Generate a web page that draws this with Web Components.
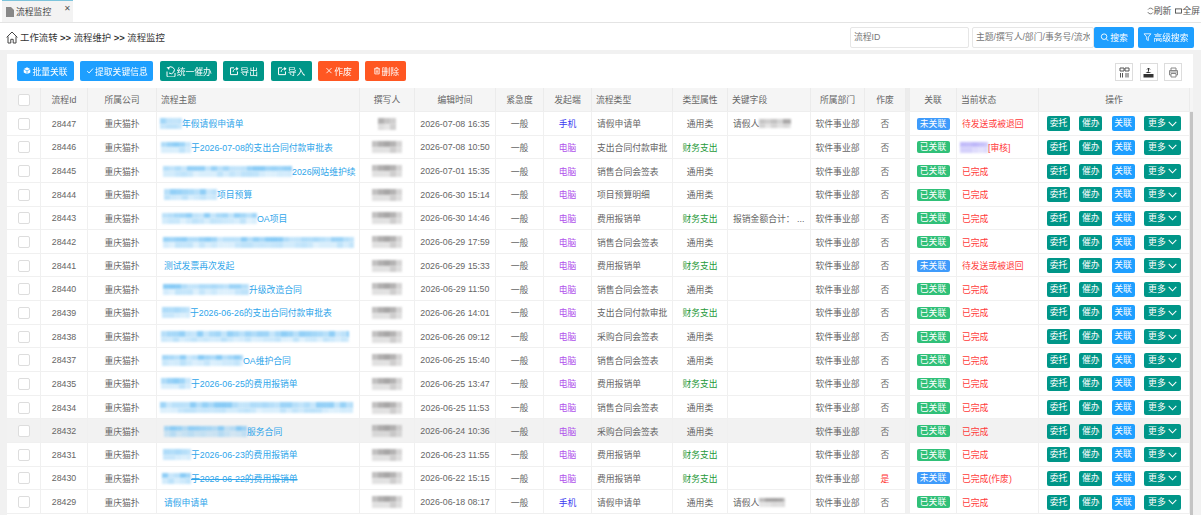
<!DOCTYPE html>
<html lang="zh-CN">
<head>
<meta charset="utf-8">
<title>流程监控</title>
<style>
  html, body { margin: 0; height: 100%; overflow: hidden; background: #f1f1f1; }
  body { font: 8.8px "Liberation Sans", "Noto Sans CJK SC", sans-serif; color: #666; }
  :root {
    --cols: 34px 47px 69px 203px 55px 81px 48px 48px 81px 55px 83px 54px 41px 4px 47px 82px 151px;
  }
</style>
</head>
<body>
<app-shell>
  <tab-bar></tab-bar>
  <crumb-bar></crumb-bar>
  <div slot="panel">
    <tool-bar></tool-bar>
    <flow-table></flow-table>
  </div>
</app-shell>

<script>
const ICONS = {
  cube: '<path fill="currentColor" d="M5 .5 9.3 2.6 5 4.7.7 2.6zM.5 3.6 4.5 5.6v3.9L.5 7.5zM9.5 3.6v3.9l-4 2V5.6z"/>',
  check: '<path fill="none" stroke="currentColor" stroke-width="1.2" d="M1 5.5 3.8 8.2 9 2.2"/>',
  urge: '<path fill="none" stroke="currentColor" stroke-width="1" d="M1.5 5.5V10a1 1 0 0 0 1 1h6a1 1 0 0 0 1-1V7M2.5 2.5a3.4 3.4 0 1 1 1 4.5"/><path fill="currentColor" d="M1 1.2 4 1 3.6 4z"/>',
  share: '<path fill="none" stroke="currentColor" stroke-width="1.1" d="M5 2H1.2v7.5h7.6V6M4 6.5C4.3 4 5.800 3 8.500 3"/><path fill="currentColor" d="M7.500 .8 10 3 7.500 5.200z"/>',
  close: '<path fill="none" stroke="currentColor" stroke-width="1.2" d="M1.5 1.5 8.500 8.500M8.500 1.500 1.500 8.500"/>',
  trash: '<path fill="none" stroke="currentColor" stroke-width="1.1" d="M1 2.500H9M3.500 2.500V1h3v1.500M2 2.500V9.500H8V2.500M4 4.500V8M6 4.500V8"/>',
  search: '<circle cx="4.500" cy="4.500" r="3.400" fill="none" stroke="currentColor" stroke-width="1.1"/><path stroke="currentColor" stroke-width="1.1" d="M7 7 9.500 9.500"/>',
  funnel: '<path fill="none" stroke="currentColor" stroke-width="1" d="M.8 1H9.200L6 5V9.300L4 8V5z"/>'
};

class AppShell extends HTMLElement {
  constructor() {
    super();
    this.attachShadow({ mode: "open" }).innerHTML = `
    <style>
      :host { display: flex; flex-direction: column; height: 100vh; filter: blur(.3px); }
      .panel { flex: 1; min-height: 0; margin: 4px 8px 0 7px; background: #fff; overflow: hidden; }
    </style>
    <slot></slot>
    <div class="panel"><slot name="panel"></slot></div>`;
  }
}

class TabBar extends HTMLElement {
  constructor() {
    super();
    this.attachShadow({ mode: "open" }).innerHTML = `
    <style>
      :host { display: flex; height: 22px; background: #fff; border-bottom: 1px solid #e4e4e4; align-items: stretch; }
      .tab { position: relative; margin-left: 2px; width: 71px; background: #f3f3f3; border-top: 1px solid #7cc4dc;
        display: flex; align-items: center; gap: 2px; padding-left: 2px; box-sizing: border-box; color: #444; font-size: 8.8px; }
      .tab svg { width: 8px; height: 10px; color: #888; margin-left: 2px; }
      .x { position: absolute; right: 1px; top: 3px; width: 8px; font-size: 8px; color: #555; }
      .right { margin-left: auto; display: flex; gap: 4px; align-items: flex-end; padding: 0 1px 6px 0; color: #555; font-size: 8.800px; line-height: 10px; }
      .right span { display: flex; align-items: center; }
      .right svg { width: 7px; height: 8px; }
    </style>
    <div class="tab">
      <svg viewBox="0 0 8 10"><path fill="currentColor" d="M0 0H5L8 3V10H0z"/></svg>
      <span>流程监控</span><span class="x">✕</span>
    </div>
    <div class="right">
      <span><svg viewBox="0 0 10 10"><path fill="none" stroke="#666" stroke-width="1.200" d="M8.800 3.500A4 4 0 0 0 1.500 3M1.200 6.500A4 4 0 0 0 8.500 7"/></svg>刷新</span>
      <span><svg viewBox="0 0 10 10"><rect x=".7" y="2" width="8.600" height="6" fill="none" stroke="#444" stroke-width="1.200"/></svg>全屏</span>
    </div>`;
  }
}

class CrumbBar extends HTMLElement {
  constructor() {
    super();
    this.attachShadow({ mode: "open" }).innerHTML = `
    <style>
      :host { display: flex; height: 27px; background: #fff; align-items: center; padding: 1px 7px 0 6px; box-sizing: border-box; }
      svg { width: 12px; height: 13px; color: #444; margin-right: 2px; }
      .path { color: #333; font-size: 9.400px; white-space: nowrap; }
      .search { margin-left: auto; display: flex; align-items: center; }
      input { height: 21px; box-sizing: border-box; border: 1px solid #e6e6e6; border-radius: 2px; padding: 0 3px; font: 8.800px "Liberation Sans", "Noto Sans CJK SC", sans-serif; color: #666; outline: 0; }
      input::placeholder { color: #777; opacity: 1; }
      .id { width: 119px; margin-right: 3px; }
      .kw { width: 122px; }
      ui-btn + ui-btn { margin-left: 4px; }
    </style>
    <svg viewBox="0 0 12 13"><path fill="none" stroke="currentColor" stroke-width="1" d="M.6 6.400 6 1l5.400 5.400M2 5.500V12h2.800V8.300h2.400V12H10V5.500"/></svg>
    <span class="path">工作流转 <b>&gt;&gt;</b> 流程维护 <b>&gt;&gt;</b> 流程监控</span>
    <div class="search">
      <input class="id" placeholder="流程ID">
      <input class="kw" placeholder="主题/撰写人/部门/事务号/流水号">
      <ui-btn tone="blue" icon="search" w="40" h="21" sz="9">搜索</ui-btn>
      <ui-btn tone="blue" icon="funnel" w="56" h="21" sz="9">高级搜索</ui-btn>
    </div>`;
  }
}

class UiBtn extends HTMLElement {
  constructor() {
    super();
    const tone = { blue: "#1e9fff", teal: "#009688", orange: "#ff5722" }[this.getAttribute("tone")];
    const icon = ICONS[this.getAttribute("icon")];
    const sz = this.getAttribute("sz") || 8;
    this.attachShadow({ mode: "open" }).innerHTML = `
    <style>
      :host { display: inline-flex; width: ${this.getAttribute("w")}px; height: ${this.getAttribute("h") || 20}px; }
      .b { flex: 1; display: flex; align-items: center; justify-content: center; gap: 1px; background: ${tone}; color: #fff; border-radius: 2px; font-size: 8.800px; white-space: nowrap; }
      svg { width: ${sz}px; height: ${sz}px; flex: none; }
    </style>
    <div class="b">${icon ? `<svg viewBox="0 0 10 11">${icon}</svg>` : ""}<slot></slot></div>`;
  }
}

class ToolBar extends HTMLElement {
  constructor() {
    super();
    this.attachShadow({ mode: "open" }).innerHTML = `
    <style>
      :host { display: flex; height: 34px; box-sizing: border-box; padding: 7px 11px 0 10px; gap: 6.4px; }
      .tools { margin-left: auto; display: flex; gap: 6.500px; padding-top: 2px; }
      .t { width: 18px; height: 18px; box-sizing: border-box; border: 1px solid #ddd; display: flex; align-items: center; justify-content: center; }
      .t svg { width: 11px; height: 11px; }
    </style>
    <ui-btn tone="blue" icon="cube" w="57">批量关联</ui-btn>
    <ui-btn tone="blue" icon="check" w="73">提取关键信息</ui-btn>
    <ui-btn tone="teal" icon="urge" w="57" sz="11">统一催办</ui-btn>
    <ui-btn tone="teal" icon="share" w="41" sz="10">导出</ui-btn>
    <ui-btn tone="teal" icon="share" w="41" sz="10">导入</ui-btn>
    <ui-btn tone="orange" icon="close" w="41">作废</ui-btn>
    <ui-btn tone="orange" icon="trash" w="41">删除</ui-btn>
    <div class="tools">
      <span class="t"><svg viewBox="0 0 11 11"><path fill="none" stroke="#555" d="M1 1H5V4H1zM6 1H10V4H6zM1.500 6V10.500M3.500 6V10.500M7 6V10.500M9 6V10.500"/></svg></span>
      <span class="t"><svg viewBox="0 0 11 11"><path fill="#333" d="M.5 7H10.500V10.500H.5zM2.500 6 5 4.500 8.500 6z"/><path fill="none" stroke="#333" d="M5.500 4.500V1M4 2.500 5.500 1 7 2.500"/></svg></span>
      <span class="t"><svg viewBox="0 0 11 11"><path fill="none" stroke="#888" d="M3 3.500V1H8V3.500M3 8H1.500V3.500H9.500V8H8M3 6.500H8V10H3zM1.500 5H9.500"/></svg></span>
    </div>`;
  }
}

// 打码区域：模糊的色块，按种子生成深浅
class BlurMask extends HTMLElement {
  constructor() {
    super();
    const w = +this.getAttribute("w");
    const h = +this.getAttribute("h") || 11;
    const rgb = { blue: "120,196,245", grey: "150,148,148", purple: "150,140,245" }[this.getAttribute("tone") || "blue"];
    let seed = w * 7 + 3;
    const strip = (k) => {
      const stops = [];
      for (let x = 0; x < w; x += 6) {
        seed = (seed * 31 + 11) % 97;
        const a = (k * (0.4 + (seed % 50) / 100)).toFixed(2);
        stops.push(`rgba(${rgb},${a}) ${x}px ${x + 6}px`);
      }
      return `linear-gradient(90deg,${stops.join(",")})`;
    };
    this.attachShadow({ mode: "open" }).innerHTML = `
    <style>
      :host { display: inline-block; flex: none; width: ${w}px; height: ${h}px; vertical-align: middle; }
      div { width: 100%; height: 50%; filter: blur(1.2px); }
    </style>
    <div style="background:${strip(1)}"></div>
    <div style="background:${strip(0.55)}"></div>`;
  }
}

class FlowHead extends HTMLElement {
  constructor() {
    super();
    const labels = [["", "c"], ["流程Id", "c"], ["所属公司", "c"], ["流程主题", "l"], ["撰写人", "c"], ["编辑时间", "c"], ["紧急度", "c"], ["发起端", "c"],
      ["流程类型", "l"], ["类型属性", "c"], ["关键字段", "l"], ["所属部门", "c"], ["作废", "c"], ["", "g"], ["关联", "c"], ["当前状态", "l"], ["操作", "c"]];
    this.attachShadow({ mode: "open" }).innerHTML = `
    <style>
      :host { display: grid; grid-template-columns: var(--cols) 3px; height: 24px; background: #f5f5f5; border-bottom: 1px solid #eee; box-sizing: border-box; }
      div { display: flex; align-items: center; justify-content: center; border-right: 1px solid #ebebeb; color: #666; box-sizing: border-box; white-space: nowrap; }
      .l { justify-content: flex-start; padding-left: 4px; }
      .g { background: #ececec; }
      i { width: 12px; height: 12px; border: 1px solid #ddd; border-radius: 2px; background: #fff; box-sizing: border-box; }
    </style>
    ${labels.map(([t, k], n) => `<div class="${k}">${n === 0 ? "<i></i>" : t}</div>`).join("")}<div style="border:0"></div>`;
  }
}

class FlowRow extends HTMLElement {
  constructor() {
    super();
    this.shadowDOM = this.attachShadow({ mode: "open" });
  }

  set row(row) {
    this._row = row;
    this.render();
  }

  render() {
    const r = this._row;
    const from = r.client === "手机" ? "mobile" : "pc";
    const linked = r.linked ? `<b class="badge on">已关联</b>` : `<b class="badge">未关联</b>`;
    const mask = r.mask ? `<blur-mask w="${r.mask[1] - r.mask[0]}" style="margin-left:${r.mask[0] - 164}px"></blur-mask>` : "";
    const who = r.who || [374, 404];
    this.shadowDOM.innerHTML = `
    <style>
      :host { display: grid; grid-template-columns: var(--cols); height: 23.65px; background: ${r.hot ? "#f2f2f2" : "#fff"}; }
      .c { display: flex; align-items: center; justify-content: center; border-right: 1px solid #f0f0f0; border-bottom: 1px solid #f0f0f0; box-sizing: border-box; min-width: 0; white-space: nowrap; color: #666; padding-top: 1px; }
      .l { justify-content: flex-start; padding-left: 5px; }
      .sub { justify-content: flex-start; padding-left: 7px; color: #2ea5ea; overflow: hidden; }
      .sub span { ${r.del ? "text-decoration: line-through;" : ""} }
      .g { background: #f1f1f1; }
      .chk { width: 12px; height: 12px; border: 1px solid #ddd; border-radius: 2px; background: #fff; box-sizing: border-box; }
      .pc { color: #b052ec; }
      .mobile { color: #3a3af0; }
      .money { color: #1f9a3a; }
      .red { color: #ff3333; }
      .status { color: #ff3a3a; }
      .badge { width: 33px; height: 12px; line-height: 12px; text-align: center; font-weight: 400; color: #fff; background: #3f9bfb; border-radius: 2px; }
      .badge.on { background: #30c078; }
      .ops { display: flex; justify-content: flex-start; padding-left: 8px; }
      .ops b { height: 15px; line-height: 15px; width: 23px; text-align: center; color: #fff; font-weight: 400; background: #009688; border-radius: 2px; margin-right: 9.300px; flex: none; }
      .ops b.blue { background: #1e9fff; }
      .ops b.more { width: 37px; display: flex; align-items: center; justify-content: center; gap: 2px; margin: 0; }
      .more svg { width: 9px; height: 6px; }
    </style>
    <div class="c"><i class="chk"></i></div>
    <div class="c">${r.id}</div>
    <div class="c">重庆猫扑</div>
    <div class="c sub">${mask}<span>${r.title}</span></div>
    <div class="c"><blur-mask tone="grey" w="${who[1] - who[0]}" h="12"></blur-mask></div>
    <div class="c">${r.time}</div>
    <div class="c">一般</div>
    <div class="c ${from}">${r.client}</div>
    <div class="c l">${r.type}</div>
    <div class="c ${r.money ? "money" : ""}">${r.money ? "财务支出" : "通用类"}</div>
    <div class="c l"><span>${r.key || ""}</span>${r.keyMask ? `<blur-mask tone="grey" w="${r.keyMask}" h="9"></blur-mask>` : ""}</div>
    <div class="c">软件事业部</div>
    <div class="c ${r.void ? "red" : ""}">${r.void ? "是" : "否"}</div>
    <div class="c g"></div>
    <div class="c">${linked}</div>
    <div class="c l status">${r.stMask ? `<blur-mask tone="purple" w="${r.stMask}" style="margin-left:-2px"></blur-mask>` : ""}${r.status}</div>
    <div class="c ops"><b>委托</b><b>催办</b><b class="blue">关联</b><b class="more">更多<svg viewBox="0 0 9 6"><path fill="none" stroke="#fff" stroke-width="1.100" d="M.7 .8 4.500 4.800 8.300 .8"/></svg></b></div>`;
  }
}

const SALE = "销售合同会签表", FEE = "费用报销单", PAY = "支出合同付款审批", BUY = "采购合同会签表", LEAVE = "请假申请单", DONE = "已完成", BACK = "待发送或被退回";
const ROWS = [
  { id: 28447, mask: [160, 182], title: "年假请假申请单", who: [380, 398], time: "2026-07-08 16:35", client: "手机", type: LEAVE, key: "请假人", keyMask: 32, status: BACK },
  { id: 28446, mask: [161, 191], title: "于2026-07-08的支出合同付款审批表", time: "2026-07-08 10:50", client: "电脑", type: PAY, money: 1, linked: 1, stMask: 28, status: "[审核]" },
  { id: 28445, mask: [163, 292], title: "2026网站维护续", time: "2026-07-01 15:35", client: "电脑", type: SALE, linked: 1, status: DONE },
  { id: 28444, mask: [164, 217], title: "项目预算", time: "2026-06-30 15:14", client: "电脑", type: "项目预算明细", linked: 1, status: DONE },
  { id: 28443, mask: [162, 257], title: "OA项目", time: "2026-06-30 14:46", client: "电脑", type: FEE, money: 1, key: "报销金额合计： ...", linked: 1, status: DONE },
  { id: 28442, mask: [163, 354], title: "", time: "2026-06-29 17:59", client: "电脑", type: SALE, linked: 1, status: DONE },
  { id: 28441, title: "测试发票再次发起", time: "2026-06-29 15:33", client: "电脑", type: FEE, money: 1, status: BACK },
  { id: 28440, mask: [163, 249], title: "升级改造合同", time: "2026-06-29 11:50", client: "电脑", type: SALE, linked: 1, status: DONE },
  { id: 28439, mask: [162, 190], title: "于2026-06-26的支出合同付款审批表", time: "2026-06-26 14:01", client: "电脑", type: PAY, money: 1, linked: 1, status: DONE },
  { id: 28438, mask: [161, 349], title: "", time: "2026-06-26 09:12", client: "电脑", type: BUY, linked: 1, status: DONE },
  { id: 28437, mask: [162, 243], title: "OA维护合同", time: "2026-06-25 15:40", client: "电脑", type: SALE, linked: 1, status: DONE },
  { id: 28435, mask: [161, 191], title: "于2026-06-25的费用报销单", time: "2026-06-25 13:47", client: "电脑", type: FEE, money: 1, linked: 1, status: DONE },
  { id: 28434, mask: [160, 353], title: "", time: "2026-06-25 11:53", client: "电脑", type: SALE, linked: 1, status: DONE },
  { id: 28432, hot: 1, mask: [164, 247], title: "服务合同", time: "2026-06-24 10:36", client: "电脑", type: BUY, linked: 1, status: DONE },
  { id: 28431, mask: [163, 191], title: "于2026-06-23的费用报销单", time: "2026-06-23 11:55", client: "电脑", type: FEE, money: 1, linked: 1, status: DONE },
  { id: 28430, del: 1, void: 1, mask: [162, 191], title: "于2026-06-22的费用报销单", time: "2026-06-22 15:15", client: "电脑", type: FEE, money: 1, status: "已完成(作废)" },
  { id: 28429, title: LEAVE, time: "2026-06-18 08:17", client: "手机", type: LEAVE, key: "请假人", keyMask: 26, linked: 1, status: DONE }
];

class FlowTable extends HTMLElement {
  constructor() {
    super();
    this.shadowDOM = this.attachShadow({ mode: "open" });
    this.shadowDOM.innerHTML = `
    <style>
      :host { display: block; position: relative; }
      .thumb { position: absolute; right: 0; top: 24px; bottom: -10px; width: 3px; background: #c4c4c4; }
    </style>
    <flow-head></flow-head>
    <div id="rows"></div>
    <div class="thumb"></div>`;
    const box = this.shadowDOM.getElementById("rows");
    ROWS.forEach((row) => {
      const el = document.createElement("flow-row");
      el.row = row;
      box.appendChild(el);
    });
  }
}

customElements.define("ui-btn", UiBtn);
customElements.define("blur-mask", BlurMask);
customElements.define("tab-bar", TabBar);
customElements.define("crumb-bar", CrumbBar);
customElements.define("tool-bar", ToolBar);
customElements.define("flow-head", FlowHead);
customElements.define("flow-row", FlowRow);
customElements.define("flow-table", FlowTable);
customElements.define("app-shell", AppShell);
</script>
</body>
</html>
